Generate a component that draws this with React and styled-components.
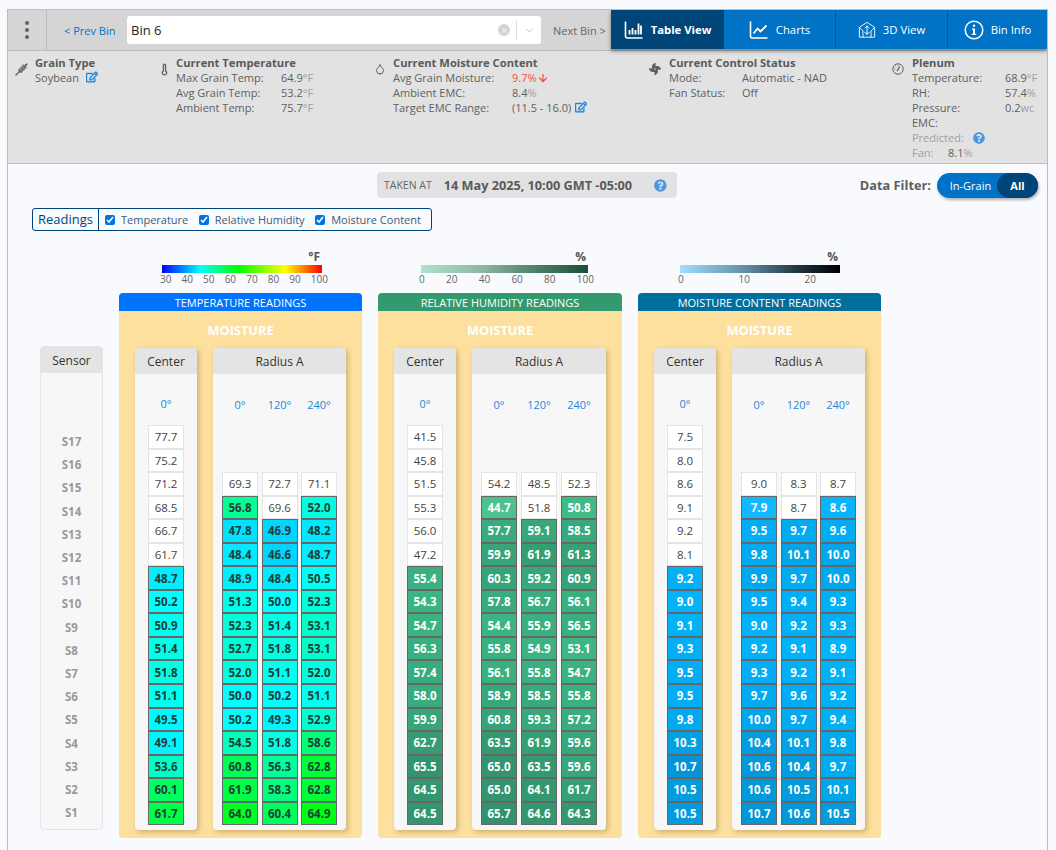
import React from 'react'
import styled, { createGlobalStyle } from 'styled-components'
import { Droplet, Thermometer, ArrowDown, ChevronDown, X } from 'lucide-react'
import { FaFan, FaRegEdit, FaQuestionCircle } from 'react-icons/fa'

const GlobalStyle = createGlobalStyle`
  html, body {
    margin: 0;
    padding: 0;
    height: 100%;
    overflow: hidden;
    background: #f9fafd;
    font-family: "Open Sans", "Liberation Sans", sans-serif;
    font-size: 12px;
    color: #5f5f5f;
  }
`

// null = no sensor at that level, first `w` values are above the grain
const TEMP = [
  { title: 'Center', cols: [{ a: '0°', w: 6, v: [77.7, 75.2, 71.2, 68.5, 66.7, 61.7, 48.7, 50.2, 50.9, 51.4, 51.8, 51.1, 49.5, 49.1, 53.6, 60.1, 61.7] }] },
  { title: 'Radius A', cols: [
    { a: '0°', w: 1, v: [null, null, 69.3, 56.8, 47.8, 48.4, 48.9, 51.3, 52.3, 52.7, 52.0, 50.0, 50.2, 54.5, 60.8, 61.9, 64.0] },
    { a: '120°', w: 2, v: [null, null, 72.7, 69.6, 46.9, 46.6, 48.4, 50.0, 51.4, 51.8, 51.1, 50.2, 49.3, 51.8, 56.3, 58.3, 60.4] },
    { a: '240°', w: 1, v: [null, null, 71.1, 52.0, 48.2, 48.7, 50.5, 52.3, 53.1, 53.1, 52.0, 51.1, 52.9, 58.6, 62.8, 62.8, 64.9] },
  ] },
]

const RH = [
  { title: 'Center', cols: [{ a: '0°', w: 6, v: [41.5, 45.8, 51.5, 55.3, 56.0, 47.2, 55.4, 54.3, 54.7, 56.3, 57.4, 58.0, 59.9, 62.7, 65.5, 64.5, 64.5] }] },
  { title: 'Radius A', cols: [
    { a: '0°', w: 1, v: [null, null, 54.2, 44.7, 57.7, 59.9, 60.3, 57.8, 54.4, 55.8, 56.1, 58.9, 60.8, 63.5, 65.0, 65.0, 65.7] },
    { a: '120°', w: 2, v: [null, null, 48.5, 51.8, 59.1, 61.9, 59.2, 56.7, 55.9, 54.9, 55.8, 58.5, 59.3, 61.9, 63.5, 64.1, 64.6] },
    { a: '240°', w: 1, v: [null, null, 52.3, 50.8, 58.5, 61.3, 60.9, 56.1, 56.5, 53.1, 54.7, 55.8, 57.2, 59.6, 59.6, 61.7, 64.3] },
  ] },
]

const MC = [
  { title: 'Center', cols: [{ a: '0°', w: 6, v: [7.5, 8.0, 8.6, 9.1, 9.2, 8.1, 9.2, 9.0, 9.1, 9.3, 9.5, 9.5, 9.8, 10.3, 10.7, 10.5, 10.5] }] },
  { title: 'Radius A', cols: [
    { a: '0°', w: 1, v: [null, null, 9.0, 7.9, 9.5, 9.8, 9.9, 9.5, 9.0, 9.2, 9.3, 9.7, 10.0, 10.4, 10.6, 10.6, 10.7] },
    { a: '120°', w: 2, v: [null, null, 8.3, 8.7, 9.7, 10.1, 9.7, 9.4, 9.2, 9.1, 9.2, 9.6, 9.7, 10.1, 10.4, 10.5, 10.6] },
    { a: '240°', w: 1, v: [null, null, 8.7, 8.6, 9.6, 10.0, 10.0, 9.3, 9.3, 8.9, 9.1, 9.2, 9.4, 9.8, 9.7, 10.1, 10.5] },
  ] },
]

const lerp = (stops, x) => {
  if (x <= stops[0][0]) return `rgb(${stops[0][1].join(',')})`
  for (let i = 1; i < stops.length; i++) {
    if (x <= stops[i][0]) {
      const [x0, c0] = stops[i - 1]
      const [x1, c1] = stops[i]
      const t = (x - x0) / (x1 - x0)
      return `rgb(${c0.map((c, n) => Math.round(c + (c1[n] - c) * t)).join(',')})`
    }
  }
  return `rgb(${stops[stops.length - 1][1].join(',')})`
}

const tempColor = (v) => lerp([[30, [0, 0, 255]], [50, [0, 255, 255]], [65, [0, 255, 20]], [84, [255, 255, 0]], [100, [255, 0, 0]]], v)
const rhColor = (v) => lerp([[44, [78, 194, 143]], [51, [63, 187, 133]], [56, [58, 176, 127]], [60, [55, 165, 120]], [66, [50, 145, 108]]], v)
const mcColor = (v) => lerp([[7.9, [16, 184, 255]], [9, [3, 178, 248]], [9.6, [2, 172, 242]], [10.1, [2, 165, 232]], [10.7, [3, 150, 214]]], v)

const SENSORS = Array.from({ length: 17 }, (_, i) => `S${17 - i}`)

const TableIcon = () => (
  <svg width="20" height="20" viewBox="0 0 20 20" fill="none" stroke="#fff">
    <path d="M1.5 1.5v14.5q0 2 2 2h15" strokeWidth="1.6" />
    <path d="M5.5 10v4.5M8.5 8v6.5M11.5 10v4.5M14.5 3.5v11M17 5.5v9" strokeWidth="1.8" />
  </svg>
)

const ChartIcon = () => (
  <svg width="20" height="20" viewBox="0 0 20 20" fill="none" stroke="#fff">
    <path d="M1.5 1.5v14.5q0 2 2 2h15" strokeWidth="1.6" />
    <path d="M4.5 13.5l4-5 3 3 6-6" strokeWidth="1.8" />
  </svg>
)

const CubeIcon = () => (
  <svg width="18" height="18" viewBox="0 0 20 20" fill="none" stroke="#fff" strokeWidth="1">
    <path d="M1.5 7L10 1.5 18.5 7v11h-17zM1.5 7l4 4M18.5 7l-4 4M5.5 11v7M14.5 11v7" />
    <path d="M10 5v10M7.5 8L10 5.5 12.5 8M7 12l3 3 3-3" strokeWidth="1.1" />
  </svg>
)

const InfoIcon = () => (
  <svg width="20" height="20" viewBox="0 0 20 20">
    <circle cx="10" cy="10" r="8.8" fill="none" stroke="#fff" strokeWidth="1.5" />
    <circle cx="10" cy="5.8" r="1.2" fill="#fff" />
    <path d="M8 8.6h3v5.2h1.2v1.2H7.8v-1.2H9V9.8H8z" fill="#fff" />
  </svg>
)

const WheatIcon = () => (
  <svg width="13" height="13" viewBox="0 0 13 13" fill="#5f5f5f">
    <path d="M0.5 12.5L10 3" stroke="#5f5f5f" strokeWidth="1.2" />
    <path d="M9 4q.2-3 3.7-3.7Q12.2 3.8 9 4zM7.6 4.6Q6.6 2.8 8.2.9q1.7 1.9-.6 3.7zM8.4 5.4q1.8 1 3.7-.6-1.9-1.7-3.7.6zM5.6 6.6Q4.6 4.8 6.2 2.9q1.7 1.9-.6 3.7zM6.4 7.4q1.8 1 3.7-.6-1.9-1.7-3.7.6zM3.6 8.6Q2.6 6.8 4.2 4.9q1.7 1.9-.6 3.7zM4.4 9.4q1.8 1 3.7-.6-1.9-1.7-3.7.6z" />
  </svg>
)

const GaugeIcon = () => (
  <svg width="12" height="12" viewBox="0 0 12 12" fill="none" stroke="#5f5f5f">
    <circle cx="6" cy="6" r="5.2" strokeWidth="1" />
    <path d="M5 8.2L7.8 3.5" strokeWidth="1.3" />
    <path d="M2.5 6h1M3.5 3.4l.7.7M6 2v1" strokeWidth=".8" />
  </svg>
)

function Cell({ value, colorFor, dry, light }) {
  if (value === null) return <Slot />
  return (
    <Slot>
      {dry
        ? <PlainCell>{value.toFixed(1)}</PlainCell>
        : <ColorCell $light={light} style={{ background: colorFor(value) }}>{value.toFixed(1)}</ColorCell>}
    </Slot>
  )
}

function ReadingPanel({ title, headColor, groups, colorFor, light, legend, width }) {
  return (
    <ReadingColumn $w={width}>
      {legend}
      <PanelHead $color={headColor}>{title}</PanelHead>
      <PanelBody>
        <PanelLabel>MOISTURE</PanelLabel>
        <CardRow>
          {groups.map((g) => (
            <Card key={g.title} $wide={g.cols.length > 1}>
              <CardHead>{g.title}</CardHead>
              <CardCols $wide={g.cols.length > 1}>
                {g.cols.map((c) => (
                  <Col key={c.a}>
                    <Angle $low={g.cols.length > 1}>{c.a}</Angle>
                    {c.v.map((v, i) => (
                      <Cell
                        key={i}
                        value={v}
                        colorFor={colorFor}
                        light={light}
                        dry={i < c.v.findIndex((x) => x !== null) + c.w}
                      />
                    ))}
                  </Col>
                ))}
              </CardCols>
            </Card>
          ))}
        </CardRow>
      </PanelBody>
    </ReadingColumn>
  )
}

function App() {
  return (
    <>
      <GlobalStyle />
      <Shell>
        <TopBar>
          <Kebab><i /><i /><i /></Kebab>
          <PrevLink>&lt; Prev Bin</PrevLink>
          <SelectBox>
            <SelectValue>Bin 6</SelectValue>
            <ClearDot><X size={7} color="#fff" strokeWidth={3} /></ClearDot>
            <SelectDivider />
            <ChevronDown size={11} color="#bbb" />
          </SelectBox>
          <NextLink>Next Bin &gt;</NextLink>
          <Tabs>
            <Tab $active $w={113}><TableIcon />Table View</Tab>
            <Tab $w={112}><ChartIcon />Charts</Tab>
            <Tab $w={112}><CubeIcon />3D View</Tab>
            <Tab $w={99} $last><InfoIcon />Bin Info</Tab>
          </Tabs>
        </TopBar>

        <InfoPanel>
          <InfoBlock $w={141}>
            <IconBox $w={20}><WheatIcon /></IconBox>
            <div>
              <Heading>Grain Type</Heading>
              <InfoLine>Soybean <EditIcon $gap={4} /></InfoLine>
            </div>
          </InfoBlock>
          <InfoBlock $w={218}>
            <IconBox $w={20} $pad={2}><Thermometer size={13} color="#5f5f5f" strokeWidth={2.4} /></IconBox>
            <div>
              <Heading>Current Temperature</Heading>
              <InfoRow $label={105}><span>Max Grain Temp:</span><span>64.9<Unit>°F</Unit></span></InfoRow>
              <InfoRow $label={105}><span>Avg Grain Temp:</span><span>53.2<Unit>°F</Unit></span></InfoRow>
              <InfoRow $label={105}><span>Ambient Temp:</span><span>75.7<Unit>°F</Unit></span></InfoRow>
            </div>
          </InfoBlock>
          <InfoBlock $w={275}>
            <IconBox $w={19}><Droplet size={12} color="#5f5f5f" /></IconBox>
            <div>
              <Heading>Current Moisture Content</Heading>
              <InfoRow $label={119}><span>Avg Grain Moisture:</span><Alert>9.7%<ArrowDown size={12} strokeWidth={2.5} /></Alert></InfoRow>
              <InfoRow $label={119}><span>Ambient EMC:</span><span>8.4<Unit>%</Unit></span></InfoRow>
              <InfoRow $label={119}><span>Target EMC Range:</span><span>(11.5 - 16.0) <EditIcon $gap={1} /></span></InfoRow>
            </div>
          </InfoBlock>
          <InfoBlock $w={243}>
            <IconBox $w={20}><FaFan size={12} color="#5f5f5f" /></IconBox>
            <div>
              <Heading>Current Control Status</Heading>
              <InfoRow $label={73}><span>Mode:</span><span>Automatic - NAD</span></InfoRow>
              <InfoRow $label={73}><span>Fan Status:</span><span>Off</span></InfoRow>
            </div>
          </InfoBlock>
          <InfoBlock>
            <IconBox $w={20}><GaugeIcon /></IconBox>
            <div>
              <Heading>Plenum</Heading>
              <InfoRow $label={93}><span>Temperature:</span><span>68.9<Unit>°F</Unit></span></InfoRow>
              <InfoRow $label={93}><span>RH:</span><span>57.4<Unit>%</Unit></span></InfoRow>
              <InfoRow $label={93}><span>Pressure:</span><span>0.2<Unit>wc</Unit></span></InfoRow>
              <InfoLine>EMC:</InfoLine>
              <InfoLine><Unit>Predicted:</Unit> <HelpIcon $size={12} /></InfoLine>
              <InfoRow $label={36}><Unit>Fan:</Unit><span>8.1<Unit>%</Unit></span></InfoRow>
            </div>
          </InfoBlock>
        </InfoPanel>

        <Content>
          <TakenRow>
            <TakenPill>
              <TakenLabel>TAKEN AT</TakenLabel>
              <TakenDate>14 May 2025, 10:00 GMT -05:00</TakenDate>
              <HelpIcon $size={13} />
            </TakenPill>
            <FilterGroup>
              <FilterLabel>Data Filter:</FilterLabel>
              <Toggle>
                <ToggleOption>In-Grain</ToggleOption>
                <ToggleOption $on>All</ToggleOption>
              </Toggle>
            </FilterGroup>
          </TakenRow>

          <ReadingsBox>
            <ReadingsTitle>Readings</ReadingsTitle>
            <ChecksRow>
              <CheckLabel><input type="checkbox" defaultChecked />Temperature</CheckLabel>
              <CheckLabel><input type="checkbox" defaultChecked />Relative Humidity</CheckLabel>
              <CheckLabel><input type="checkbox" defaultChecked />Moisture Content</CheckLabel>
            </ChecksRow>
          </ReadingsBox>

          <Board>
            <SensorCard>
              <SensorHead>Sensor</SensorHead>
              <SensorList>
                {SENSORS.map((s) => <SensorName key={s}>{s}</SensorName>)}
              </SensorList>
            </SensorCard>

            <ReadingPanel
              title="TEMPERATURE READINGS"
              headColor="#0073ff"
              groups={TEMP}
              colorFor={tempColor}
              width={243}
              legend={
                <Legend $left={43} $w={160}>
                  <LegendUnit>°F</LegendUnit>
                  <LegendBar $bg="linear-gradient(90deg,#0000ff,#00ffff 24%,#00ff00 48%,#ffff00 77%,#ff0000)" />
                  <LegendTicks>{[30, 40, 50, 60, 70, 80, 90, 100].map((t) => <span key={t}>{t}</span>)}</LegendTicks>
                </Legend>
              }
            />
            <ReadingPanel
              title="RELATIVE HUMIDITY READINGS"
              headColor="#339a70"
              groups={RH}
              colorFor={rhColor}
              light
              width={244}
              legend={
                <Legend $left={43} $w={167}>
                  <LegendUnit>%</LegendUnit>
                  <LegendBar $bg="linear-gradient(90deg,#aee2cd,#8fb9a7 35%,#55866f 65%,#1b4d37)" />
                  <LegendTicks>{[0, 20, 40, 60, 80, 100].map((t) => <span key={t}>{t}</span>)}</LegendTicks>
                </Legend>
              }
            />
            <ReadingPanel
              title="MOISTURE CONTENT READINGS"
              headColor="#006f9e"
              groups={MC}
              colorFor={mcColor}
              light
              width={243}
              legend={
                <Legend $left={42} $w={160}>
                  <LegendUnit>%</LegendUnit>
                  <LegendBar $bg="linear-gradient(90deg,#9fdfff,#5f8ba3 42%,#20303c 75%,#000)" />
                  <LegendTicks $end={24}>{[0, 10, 20].map((t) => <span key={t}>{t}</span>)}</LegendTicks>
                </Legend>
              }
            />
          </Board>
        </Content>
      </Shell>
    </>
  )
}

export default App

const Shell = styled.div`
  box-sizing: border-box;
  margin: 9px 8px 0 7px;
  height: 841px;
  overflow: hidden;
  border: 1px solid #bdbdbd;
  border-bottom: none;
`

const TopBar = styled.div`
  display: flex;
  align-items: center;
  height: 40px;
  background: #d5d5d5;
  border-bottom: 1px solid #bdbdbd;
`

const Kebab = styled.div`
  width: 38px;
  height: 100%;
  margin-right: 17px;
  border-right: 1px solid #bdbdbd;
  display: flex;
  flex-direction: column;
  align-items: center;
  justify-content: center;
  gap: 2.5px;

  i {
    width: 4.5px;
    height: 4.5px;
    border-radius: 50%;
    background: #606060;
  }
`

const PrevLink = styled.a`
  width: 63px;
  font-size: 11px;
  color: #0073c6;
`

const SelectBox = styled.div`
  width: 414px;
  height: 28px;
  display: flex;
  align-items: center;
  background: #fff;
  border-radius: 3px;
  padding: 0 6px 0 4px;
  box-sizing: border-box;
`

const SelectValue = styled.span`
  flex: 1;
  font-size: 13px;
  color: #222;
`

const ClearDot = styled.span`
  width: 12px;
  height: 12px;
  margin-right: 6px;
  border-radius: 50%;
  background: #d4d4d4;
  display: flex;
  align-items: center;
  justify-content: center;
`

const SelectDivider = styled.span`
  width: 1px;
  height: 20px;
  margin-right: 7px;
  background: #ddd;
`

const NextLink = styled.a`
  margin-left: 12px;
  width: 58px;
  font-size: 11px;
  color: #666;
`

const Tabs = styled.div`
  display: flex;
  height: 39px;
  align-self: flex-start;
  box-shadow: 0 2px 4px rgba(0, 0, 0, 0.45);
  position: relative;
`

const Tab = styled.div`
  box-sizing: border-box;
  width: ${(p) => p.$w}px;
  display: flex;
  align-items: center;
  justify-content: center;
  gap: 7px;
  font-size: 11.3px;
  font-weight: ${(p) => (p.$active ? 700 : 400)};
  color: #fff;
  background: ${(p) => (p.$active ? '#004578' : '#0073c6')};
  border-right: ${(p) => (p.$last || p.$active ? 'none' : '1px solid #005a9e')};
`

const InfoPanel = styled.div`
  display: flex;
  height: 113px;
  box-sizing: border-box;
  padding: 4px 0 0 7px;
  background: #e2e2e2;
  border-bottom: 1px solid #bdbdbd;
`

const InfoBlock = styled.div`
  display: flex;
  ${(p) => p.$w && `width: ${p.$w}px;`}
  flex-shrink: 0;
  line-height: 15px;
`

const IconBox = styled.div`
  box-sizing: border-box;
  width: ${(p) => p.$w}px;
  padding: 8px 0 0 ${(p) => p.$pad || 0}px;
  flex-shrink: 0;
`

const Heading = styled.div`
  font-size: 11.2px;
  font-weight: 700;
  color: #5a5a5a;
  white-space: nowrap;
`

const InfoLine = styled.div`
  font-size: 11px;
  white-space: nowrap;
`

const InfoRow = styled.div`
  display: grid;
  grid-template-columns: ${(p) => p.$label}px auto;
  font-size: 11px;
  white-space: nowrap;
`

const Unit = styled.span`
  color: #a0a0a0;
`

const Alert = styled.span`
  color: #f4503c;
  display: inline-flex;
  align-items: center;
`

const EditIcon = styled(FaRegEdit)`
  width: 12px;
  height: 12px;
  margin-left: ${(p) => p.$gap}px;
  vertical-align: -1px;
  color: #1f86dc;
  stroke: currentColor;
  stroke-width: 20;
`

const HelpIcon = styled(FaQuestionCircle)`
  width: ${(p) => p.$size}px;
  height: ${(p) => p.$size}px;
  margin-left: 6px;
  vertical-align: -2px;
  color: #4a98e4;
`

const Content = styled.div`
  padding: 8px 0 0 24px;
`

const TakenRow = styled.div`
  position: relative;
  display: flex;
  justify-content: flex-end;
  height: 26px;
  padding-left: 345px;
`

const TakenPill = styled.div`
  box-sizing: border-box;
  width: 300px;
  height: 26px;
  margin-right: auto;
  padding: 0 10px 0 7px;
  display: flex;
  align-items: center;
  background: #e2e2e2;
  border-radius: 4px;
`

const TakenLabel = styled.span`
  width: 61px;
  font-size: 10.5px;
  color: #666;
`

const TakenDate = styled.span`
  width: 209px;
  font-size: 12.7px;
  font-weight: 700;
  color: #5a5a5a;
  white-space: nowrap;
`

const FilterGroup = styled.div`
  display: flex;
  align-items: center;
  gap: 6px;
  margin-right: 9px;
`

const FilterLabel = styled.span`
  font-size: 12.8px;
  font-weight: 700;
  color: #5f5f5f;
`

const Toggle = styled.div`
  display: flex;
  width: 101px;
  height: 25px;
  border-radius: 13px;
  background: #0073c6;
  box-shadow: 1px 2px 3px rgba(0, 0, 0, 0.3);
  overflow: hidden;
`

const ToggleOption = styled.span`
  flex: ${(p) => (p.$on ? '0 0 41px' : '1')};
  display: flex;
  align-items: center;
  justify-content: center;
  padding-left: ${(p) => (p.$on ? 0 : 7)}px;
  font-size: 11px;
  font-weight: ${(p) => (p.$on ? 700 : 400)};
  color: #fff;
  background: ${(p) => (p.$on ? '#004578' : 'transparent')};
  border-radius: ${(p) => (p.$on ? '13px 0 0 13px' : '0')};
`

const ReadingsBox = styled.div`
  display: inline-flex;
  box-sizing: border-box;
  height: 23px;
  margin: 10px 0 0 0;
  border: 1px solid #004578;
  border-radius: 3px;
  align-items: center;
`

const ReadingsTitle = styled.span`
  height: 100%;
  padding: 0 5px 2px;
  box-sizing: border-box;
  display: flex;
  align-items: center;
  font-size: 13px;
  color: #004578;
  border-right: 1px solid #004578;
`

const ChecksRow = styled.div`
  display: flex;
  gap: 10.5px;
  padding: 0 10px 0 6px;
`

const CheckLabel = styled.label`
  display: flex;
  align-items: center;
  font-size: 11px;
  color: #3d5a78;

  input {
    width: 10px;
    height: 10px;
    margin: 0 6px 0 0;
    accent-color: #0073e6;
  }
`

const Board = styled.div`
  display: flex;
  gap: 16px;
  margin-top: 18px;
  padding-left: 8px;
`

const SensorCard = styled.div`
  align-self: flex-end;
  box-sizing: border-box;
  width: 63px;
  height: 484px;
  margin-bottom: 8px;
  background: #f7f7f7;
  border: 1px solid #e4e4e4;
  border-radius: 4px;
`

const SensorHead = styled.div`
  height: 26px;
  display: flex;
  align-items: center;
  justify-content: center;
  background: #e4e4e4;
  font-size: 12px;
  color: #333;
`

const SensorList = styled.div`
  padding-top: 57px;
`

const SensorName = styled.div`
  height: 23.19px;
  display: flex;
  align-items: center;
  justify-content: center;
  font-size: 11.5px;
  font-weight: 700;
  color: #999;
`

const ReadingColumn = styled.div`
  width: ${(p) => p.$w}px;
`

const Legend = styled.div`
  width: ${(p) => p.$w}px;
  height: 44px;
  margin-left: ${(p) => p.$left}px;
`

const LegendUnit = styled.div`
  height: 16px;
  padding-right: 2px;
  text-align: right;
  font-size: 12px;
  font-weight: 700;
  line-height: 15px;
  color: #555;
`

const LegendBar = styled.div`
  height: 8px;
  background: ${(p) => p.$bg};
`

const LegendTicks = styled.div`
  display: flex;
  justify-content: space-between;
  margin: 0 ${(p) => (p.$end ? p.$end : -6)}px 0 -2px;
  font-size: 10px;
  line-height: 12px;
  color: #666;
`

const PanelHead = styled.div`
  height: 18px;
  display: flex;
  align-items: center;
  justify-content: center;
  border-radius: 4px 4px 0 0;
  background: ${(p) => p.$color};
  color: #fff;
  font-size: 11px;
`

const PanelBody = styled.div`
  height: 527px;
  box-sizing: border-box;
  padding: 0 16px;
  background: #fddf9e;
  border-radius: 0 0 4px 4px;
`

const PanelLabel = styled.div`
  height: 37px;
  line-height: 39px;
  text-align: center;
  font-size: 12.8px;
  font-weight: 700;
  color: #fff;
`

const CardRow = styled.div`
  display: flex;
  gap: 16px;
`

const Card = styled.div`
  ${(p) => (p.$wide ? 'flex: 1;' : 'width: 62px;')}
  height: 482px;
  background: #f7f7f7;
  border-radius: 4px;
  box-shadow: 2px 2px 5px rgba(90, 70, 20, 0.3);
  overflow: hidden;
`

const CardHead = styled.div`
  height: 26px;
  display: flex;
  align-items: center;
  justify-content: center;
  background: #e4e4e4;
  font-size: 12px;
  color: #333;
`

const CardCols = styled.div`
  display: flex;
  justify-content: ${(p) => (p.$wide ? 'space-between' : 'center')};
  padding: 0 ${(p) => (p.$wide ? 9 : 0)}px;
`

const Col = styled.div`
  width: 36px;
`

const Angle = styled.div`
  height: 51px;
  padding-top: ${(p) => (p.$low ? 9 : 8)}px;
  box-sizing: border-box;
  display: flex;
  align-items: center;
  justify-content: center;
  font-size: 11px;
  color: #1f86dc;
`

const Slot = styled.div`
  height: 23.56px;
`

const PlainCell = styled.div`
  box-sizing: border-box;
  height: 100%;
  display: flex;
  align-items: center;
  justify-content: center;
  background: #fff;
  border: 1px solid #e4e4e4;
  font-size: 11.5px;
  color: #444;
`

const ColorCell = styled.div`
  box-sizing: border-box;
  height: 100%;
  display: flex;
  align-items: center;
  justify-content: center;
  border: 1px solid #666;
  font-size: 11.5px;
  font-weight: 700;
  color: ${(p) => (p.$light ? '#fff' : '#1e4038')};
`
